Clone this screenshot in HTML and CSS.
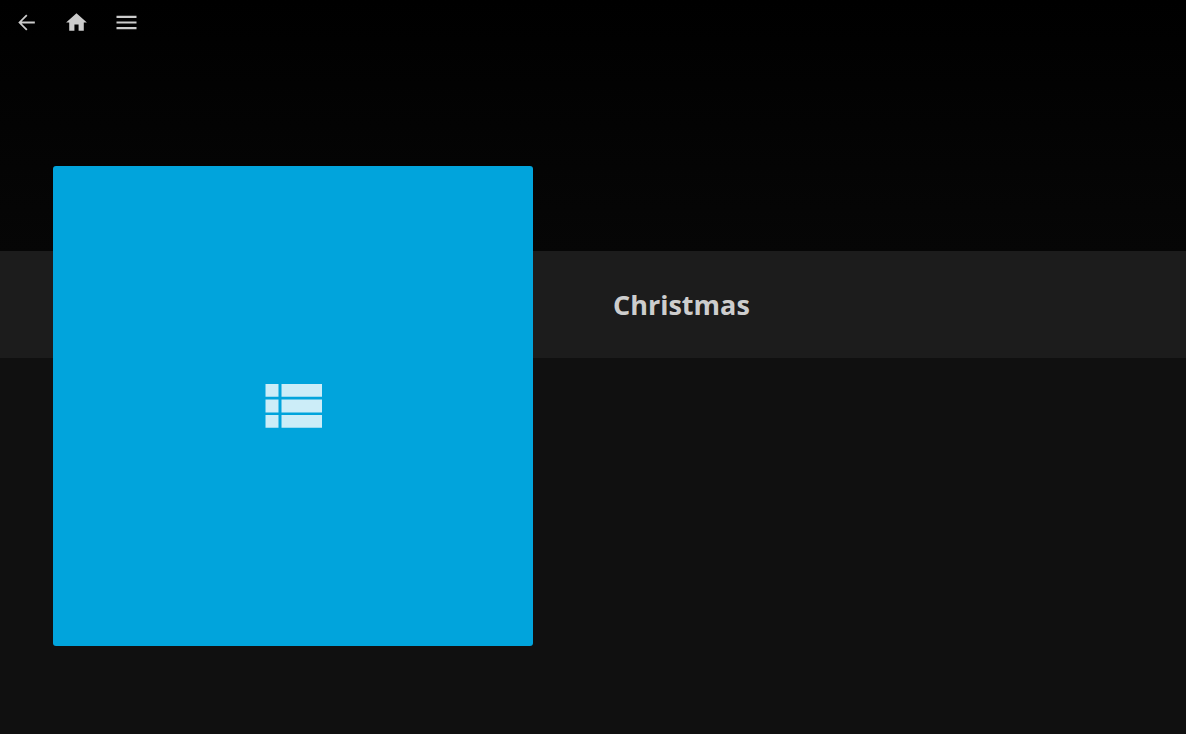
FILE: index.html
```html
<!DOCTYPE html>
<html lang="en">
<head>
<meta charset="utf-8">
<title>Christmas</title>
<link rel="stylesheet" href="styles.css">
</head>
<body>
<div class="backdrop">
  <nav class="topbar">
    <button class="icon-btn" aria-label="Back"><svg viewBox="0 0 24 24"><path d="M20 11.15H7.3l5.6-5.6-1.2-1.2L4.1 12l7.6 7.65 1.2-1.2-5.6-5.6H20z"/></svg></button>
    <button class="icon-btn" aria-label="Home"><svg viewBox="0 0 24 24"><path d="M10 20v-6h4v6h5v-8h3L12 3 2 12h3v8z"/></svg></button>
    <button class="icon-btn" aria-label="Menu"><svg viewBox="0 0 24 24"><path d="M2.4 18.4h19.2v-2H2.4zm0-5.4h19.2v-2H2.4zm0-7.4v2h19.2v-2z"/></svg></button>
  </nav>
</div>
<header class="band">
  <h1 class="title">Christmas</h1>
</header>
<div class="poster">
  <svg class="poster-icon" viewBox="0 0 57 44"><path d="M.5 0h13v12.8H.5zM16.5 0H57v12.8H16.5zM.5 15.4h13v13H.5zM16.5 15.4H57v13H16.5zM.5 31h13v12.7H.5zM16.5 31H57v12.7H16.5z"/></svg>
</div>
</body>
</html>
```
FILE: styles.css
```css
* { box-sizing: border-box; }
html, body { height: 100%; }
body {
  margin: 0;
  background: #101010;
  font-family: "Open Sans", sans-serif;
  overflow: hidden;
}
.backdrop {
  height: 251px;
  background: linear-gradient(to bottom, #000 0, #060606 100%);
}
.topbar {
  display: flex;
  padding: 0 1px;
}
.icon-btn {
  width: 50px;
  height: 44px;
  padding: 0;
  border: 0;
  background: none;
  display: flex;
  align-items: center;
  justify-content: center;
}
.icon-btn svg {
  width: 25px;
  height: 25px;
  fill: #ccc;
}
.band {
  height: 107px;
  background: #1c1c1c;
  padding-left: 613px;
  display: flex;
  align-items: center;
}
.title {
  margin: 0 0 1px;
  font-size: 27px;
  font-weight: 700;
  color: rgba(255, 255, 255, 0.8);
}
.poster {
  position: absolute;
  left: 53px;
  top: 166px;
  width: 480px;
  height: 480px;
  border-radius: 3px;
  background: #01a4dc;
  display: flex;
  align-items: center;
  justify-content: center;
}
.poster-icon {
  width: 57px;
  height: 44px;
  fill: rgba(255, 255, 255, 0.8);
}
```
